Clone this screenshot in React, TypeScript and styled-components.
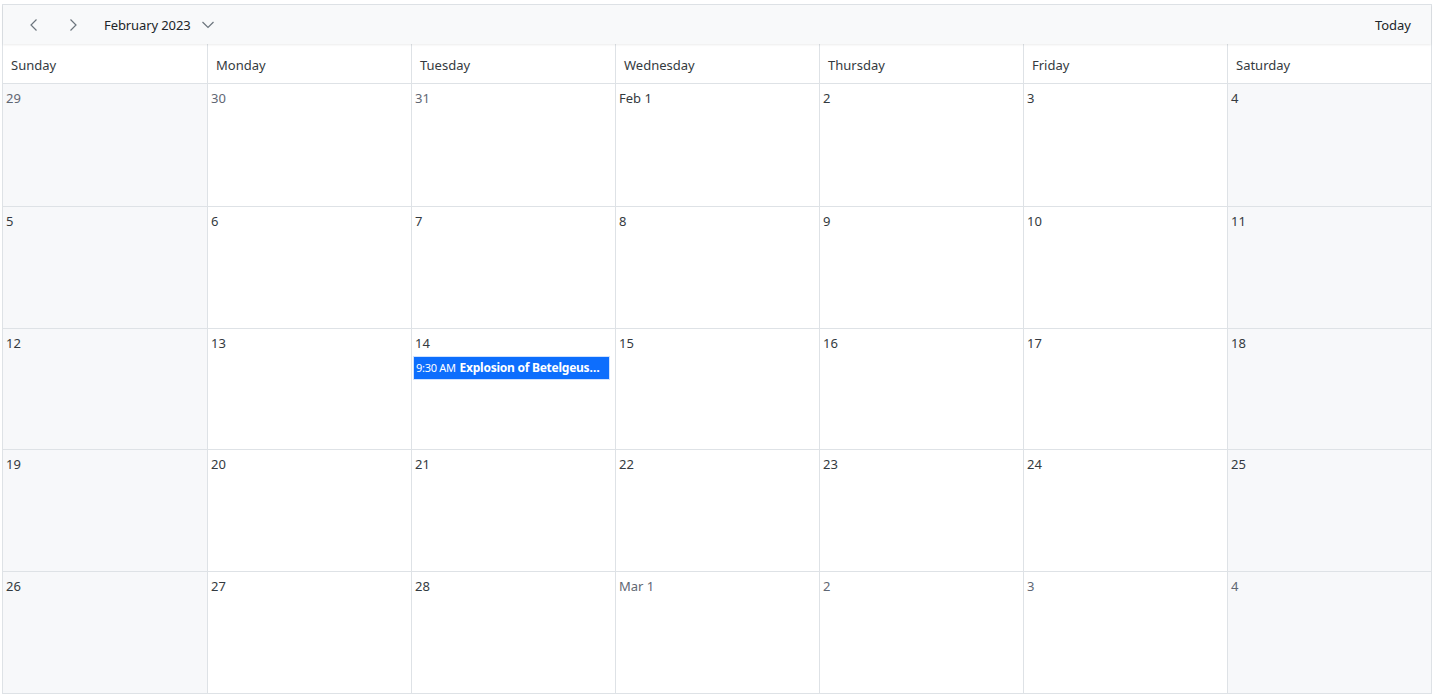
import styled, { createGlobalStyle } from 'styled-components';

const GlobalStyle = createGlobalStyle`
  html, body {
    margin: 0;
    padding: 0;
    background: #fff;
  }
  body {
    font-family: "Segoe UI", "Noto Sans", "Open Sans", sans-serif;
    color: #212529;
  }
`;

type Day = { label: string; muted?: boolean; weekend?: boolean; events?: CalEvent[] };
type CalEvent = { time: string; title: string };

const weekdays = ['Sunday', 'Monday', 'Tuesday', 'Wednesday', 'Thursday', 'Friday', 'Saturday'];

const weeks: Day[][] = (() => {
	const rows: Day[][] = [];
	// month grid starts on Sun Jan 29 2023
	const start = new Date(2023, 0, 29);
	for (let w = 0; w < 5; w++) {
		const row: Day[] = [];
		for (let d = 0; d < 7; d++) {
			const date = new Date(start);
			date.setDate(start.getDate() + w * 7 + d);
			const inMonth = date.getMonth() === 1;
			let label = String(date.getDate());
			if (date.getDate() === 1) {
				label = (date.getMonth() === 1 ? 'Feb ' : 'Mar ') + date.getDate();
			}
			const day: Day = { label, muted: !inMonth, weekend: d === 0 || d === 6 };
			if (inMonth && date.getDate() === 14) {
				day.events = [{ time: '9:30 AM', title: 'Explosion of Betelgeuse Star' }];
			}
			row.push(day);
		}
		rows.push(row);
	}
	return rows;
})();

export default function App() {
	return (
		<>
			<GlobalStyle />
			<Calendar>
				<Toolbar>
					<NavGroup>
						<IconButton aria-label="Previous">
							<svg width="16" height="16" viewBox="0 0 16 16" fill="none" stroke="#6c757d" strokeWidth="1.2">
								<path d="M10.5 2.5 L5 8 L10.5 13.5" />
							</svg>
						</IconButton>
						<IconButton aria-label="Next">
							<svg width="16" height="16" viewBox="0 0 16 16" fill="none" stroke="#6c757d" strokeWidth="1.2">
								<path d="M5.5 2.5 L11 8 L5.5 13.5" />
							</svg>
						</IconButton>
						<MonthPicker>
							February 2023
							<svg width="16" height="16" viewBox="0 0 16 16" fill="none" stroke="#6c757d" strokeWidth="1.2">
								<path d="M2.5 5 L8 10.5 L13.5 5" />
							</svg>
						</MonthPicker>
					</NavGroup>
					<TodayButton>Today</TodayButton>
				</Toolbar>
				<HeaderRow>
					{weekdays.map((w) => (
						<HeaderCell key={w}>{w}</HeaderCell>
					))}
				</HeaderRow>
				<Body>
					{weeks.map((row, i) => (
						<WeekRow key={i}>
							{row.map((day, j) => (
								<DayCell key={j} $weekend={day.weekend}>
									<DayNumber $muted={day.muted}>{day.label}</DayNumber>
									{day.events?.map((ev) => (
										<EventChip key={ev.title}>
											<EventTime>{ev.time}</EventTime>
											<EventTitle>{ev.title}</EventTitle>
										</EventChip>
									))}
								</DayCell>
							))}
						</WeekRow>
					))}
				</Body>
			</Calendar>
		</>
	);
}

const Calendar = styled.div`
  margin: 4px 3px 0 2px;
  height: 690px;
  border: 1px solid #dee2e6;
  display: flex;
  flex-direction: column;
  box-sizing: border-box;
`;

const Toolbar = styled.div`
  height: 39px;
  flex: none;
  display: flex;
  align-items: center;
  justify-content: space-between;
  background: #f8f9fa;
  box-shadow: 0 1px 2px rgba(0, 0, 0, 0.08);
  position: relative;
  z-index: 1;
  padding: 0 20px 0 19px;
`;

const NavGroup = styled.div`
  display: flex;
  align-items: center;
`;

const IconButton = styled.button`
  width: 24px;
  height: 24px;
  margin-right: 15px;
  border: none;
  background: transparent;
  display: flex;
  align-items: center;
  justify-content: center;
  padding: 0;
  cursor: pointer;
`;

const MonthPicker = styled.button`
  display: flex;
  align-items: center;
  gap: 9px;
  border: none;
  background: transparent;
  font: inherit;
  font-size: 13px;
  letter-spacing: -0.1px;
  color: #212529;
  padding: 0;
  margin-left: 4px;
  cursor: pointer;
`;

const TodayButton = styled.button`
  border: none;
  background: transparent;
  font: inherit;
  font-size: 13px;
  color: #212529;
  padding: 0;
  cursor: pointer;
`;

const HeaderRow = styled.div`
  display: grid;
  grid-template-columns: repeat(7, 1fr);
  height: 40px;
  flex: none;
  border-bottom: 1px solid #dee2e6;
  box-sizing: border-box;
`;

const HeaderCell = styled.div`
  display: flex;
  align-items: center;
  padding: 2px 0 0 8px;
  font-size: 13px;
  color: #343a40;
  border-left: 1px solid #dee2e6;
  &:first-child {
    border-left: none;
  }
`;

const Body = styled.div`
  flex: 1;
  display: grid;
  grid-template-rows: repeat(5, 1fr);
`;

const WeekRow = styled.div`
  display: grid;
  grid-template-columns: repeat(7, 1fr);
  border-top: 1px solid #dee2e6;
  &:first-child {
    border-top: none;
  }
`;

const DayCell = styled.div<{ $weekend?: boolean }>`
  background: ${(p) => (p.$weekend ? '#f7f8fa' : '#fff')};
  border-left: 1px solid #dee2e6;
  padding: 5px 1px 0 0;
  min-width: 0;
  &:first-child {
    border-left: none;
  }
`;

const DayNumber = styled.div<{ $muted?: boolean }>`
  font-size: 13px;
  line-height: 18px;
  padding-left: 3px;
  color: ${(p) => (p.$muted ? '#5f6773' : '#343a40')};
  margin-bottom: 4px;
`;

const EventChip = styled.div`
  height: 24px;
  background: #0d6efd;
  color: #fff;
  display: flex;
  align-items: center;
  gap: 4px;
  padding: 0 3px 0 2px;
  margin: 0 4px 0 1px;
  border: 1px solid #cfe2ff;
  box-sizing: border-box;
  white-space: nowrap;
  overflow: hidden;
`;

const EventTime = styled.span`
  font-size: 11px;
  letter-spacing: -0.3px;
  flex: none;
`;

const EventTitle = styled.span`
  font-size: 12px;
  font-weight: 700;
  letter-spacing: -0.25px;
  overflow: hidden;
  text-overflow: ellipsis;
`;
